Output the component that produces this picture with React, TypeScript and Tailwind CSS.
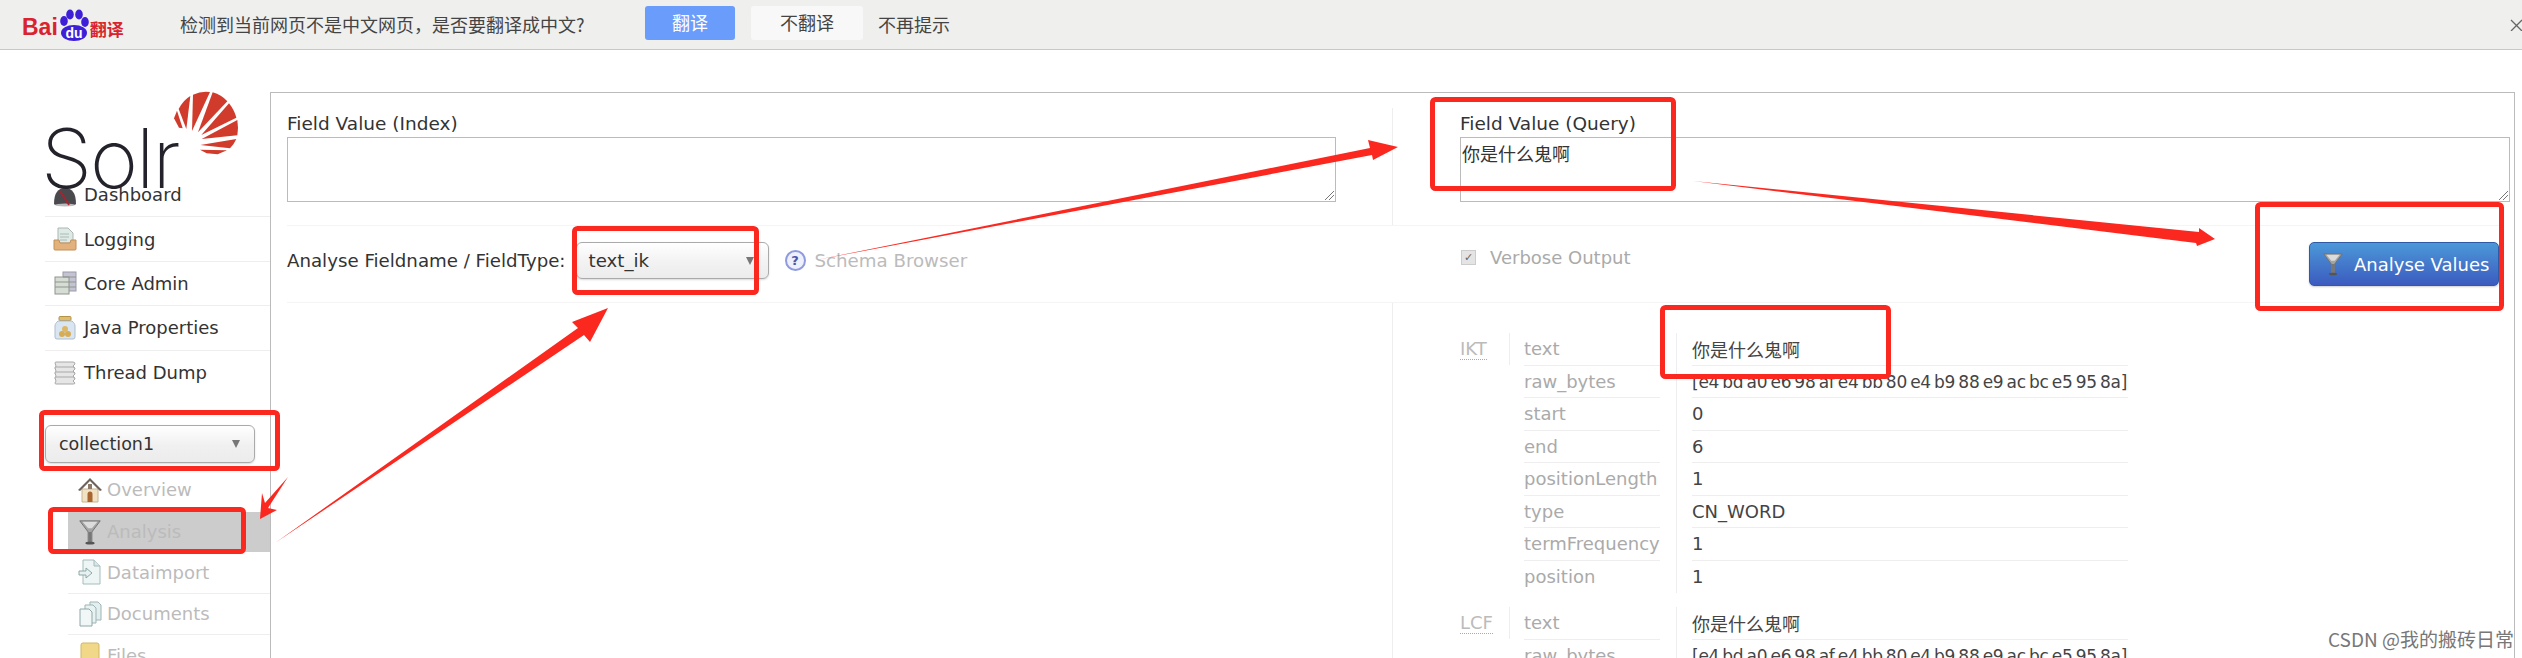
import type { ReactNode } from "react";

const CJK = "font-['Noto_Sans_CJK_SC',sans-serif]";

function Funnel({ className }: { className?: string }) {
  return (
    <svg viewBox="0 0 24 28" className={className}>
      <path d="M1 2h22l-9 12v11h-4V14z" fill="#a4a4a4" stroke="#6f6f6f" strokeWidth="1" />
      <path d="M4 3h16l-6 7h-4z" fill="#dcdcdc" />
      <rect x="10.5" y="14" width="3" height="12" fill="#777" />
      <ellipse cx="12" cy="26" rx="5" ry="1.5" fill="#555" />
    </svg>
  );
}

function IconDashboard() {
  return (
    <svg viewBox="0 0 24 24" className="h-6 w-6">
      <path d="M1 21c0-11 4-16 11-16s11 5 11 16c0 2-22 2-22 0z" fill="#4a4a4e" />
      <ellipse cx="12" cy="22" rx="10" ry="1.5" fill="#bbb" />
      <path d="M7 8l9 14" stroke="#b0202c" strokeWidth="1.6" />
    </svg>
  );
}

function IconLogging() {
  return (
    <svg viewBox="0 0 24 24" className="h-6 w-6">
      <path d="M5 1h10l5 5v10H5z" fill="#dfe9e6" stroke="#a9b8b4" />
      <path d="M7 7h9M7 10h9M7 13h7" stroke="#a8bcb8" />
      <path d="M1 13h5l1 3h10l1-3h5v9a1 1 0 0 1-1 1H2a1 1 0 0 1-1-1z" fill="#e3b27c" stroke="#c28f58" />
    </svg>
  );
}

function IconCores() {
  return (
    <svg viewBox="0 0 24 24" className="h-6 w-6">
      <rect x="10" y="1" width="13" height="19" fill="#c3c3d3" stroke="#9a9aa8" />
      <rect x="2" y="6" width="14" height="17" fill="#d6ddd4" stroke="#8f948e" />
      <path d="M2 11h14M2 16h14M10 6h13M16 11h7M16 16h7" stroke="#8f948e" />
    </svg>
  );
}

function IconJar() {
  return (
    <svg viewBox="0 0 24 24" className="h-6 w-6">
      <rect x="6" y="0.5" width="12" height="4" rx="1" fill="#e0bd6a" stroke="#b3924a" />
      <path d="M5 5h14c2 2 3 3 3 5v11a2 2 0 0 1-2 2H4a2 2 0 0 1-2-2V10c0-2 1-3 3-5z" fill="#d9e6f2" stroke="#aebdcb" />
      <circle cx="12" cy="13" r="3" fill="#dcb765" />
      <circle cx="9" cy="18" r="3" fill="#d6ad55" />
      <circle cx="15" cy="18" r="3" fill="#d6ad55" />
    </svg>
  );
}

function IconStack() {
  return (
    <svg viewBox="0 0 24 24" className="h-6 w-6">
      {[1, 6, 11, 16].map((y) => (
        <path key={y} d={`M2 ${y + 1}q0-1 1-1h17q2 0 2 2l-2 2 2 2q0 1-2 1H3q-1 0-1-1l1-2z`} fill="#e6e6e6" stroke="#a8a8a8" />
      ))}
    </svg>
  );
}

function IconHouse() {
  return (
    <svg viewBox="0 0 24 26" className="h-[26px] w-6">
      <path d="M4 12h16v13H4z" fill="#f2e2c4" stroke="#c9b48f" />
      <path d="M0 13L12 1l12 12-2 1L12 4 2 14z" fill="#6d625c" />
      <path d="M9.5 17a2.5 2.5 0 0 1 5 0v8h-5z" fill="#a9652f" />
      <rect x="10" y="7" width="4" height="5" fill="#8b7a68" />
    </svg>
  );
}

function IconImport() {
  return (
    <svg viewBox="0 0 24 26" className="h-[26px] w-6">
      <path d="M5 1h11l6 6v18H5z" fill="#eef5f5" stroke="#a5bcbc" />
      <path d="M16 1v6h6" fill="#d8e6e6" stroke="#a5bcbc" />
      <path d="M1 12h7V9l6 5-6 5v-3H1z" fill="#e8f1f1" stroke="#8ea8a8" />
    </svg>
  );
}

function IconDocuments() {
  return (
    <svg viewBox="0 0 24 26" className="h-[26px] w-6">
      <path d="M12 1h8l3 3v15H12z" fill="#e4eeee" stroke="#9db5b5" />
      <path d="M7 4h8l3 3v15H7z" fill="#e9f2f2" stroke="#9db5b5" />
      <path d="M2 8h9l3 3v14H2z" fill="#f1f7f7" stroke="#8ea8a8" />
    </svg>
  );
}

function IconFolder() {
  return (
    <svg viewBox="0 0 24 26" className="h-[26px] w-6">
      <rect x="3" y="1" width="18" height="24" rx="2" fill="#f0d888" stroke="#d3b763" />
    </svg>
  );
}

function NavRow({ icon, label, last }: { icon: ReactNode; label: string; last?: boolean }) {
  return (
    <div className={`flex h-[44.4px] items-center gap-[7px] pl-2 text-[18px] text-[#333] ${last ? "" : "border-b border-[#eeeeee]"}`}>
      {icon}
      <span>{label}</span>
    </div>
  );
}

function SubRow({ icon, label, active, border, h }: { icon: ReactNode; label: string; active?: boolean; border?: boolean; h: string }) {
  return (
    <div className={`flex items-center gap-[5px] pl-[10px] text-[18px] text-[#bbbbbb] ${h} ${active ? "bg-[#cccccc]" : ""} ${border ? "border-b border-[#eeeeee]" : ""}`}>
      {icon}
      <span>{label}</span>
    </div>
  );
}

function Sidebar() {
  return (
    <aside className="w-[225px] shrink-0">
      <div className="relative h-[81px]">
        <span className="absolute left-[-4px] top-[17px] text-[82px] leading-[100px] font-extralight tracking-[-2px] text-[#24232b] font-['Inter',sans-serif]">
          Solr
        </span>
        <svg viewBox="0 0 240 240" className="absolute left-[120px] top-[-7px] h-20 w-20">
          <g fill="#d03b2c">
            <path d="M27 100L36 77L53 130L42 128z" />
            <path d="M41 72Q55 45 76 33L64 132z" />
            <path d="M84 29Q110 17 135 21L81 138z" />
            <path d="M143 22Q170 30 187 49L99 142z" />
            <path d="M192 55Q208 75 214 98L109 150z" />
            <path d="M217 105Q221 130 217 151L110 162z" />
            <path d="M214 162Q207 178 195 190L106 180z" />
            <path d="M186 196L158 208L125 205L105 194z" />
          </g>
        </svg>
      </div>
      <NavRow icon={<IconDashboard />} label="Dashboard" />
      <NavRow icon={<IconLogging />} label="Logging" />
      <NavRow icon={<IconCores />} label="Core Admin" />
      <NavRow icon={<IconJar />} label="Java Properties" />
      <NavRow icon={<IconStack />} label="Thread Dump" last />
      <div className="mt-[30px] flex h-[38px] w-[210px] items-center justify-between rounded-[6px] border border-[#aaaaaa] bg-[linear-gradient(#ffffff,#f0f0f0_55%,#ececec)] pl-[13px] pr-[14px] text-[17.5px] text-[#333] shadow-[0_1px_2px_rgba(0,0,0,0.15)]">
        <span>collection1</span>
        <span className="h-0 w-0 border-x-[4px] border-t-[8px] border-x-transparent border-t-[#777]" />
      </div>
      <div className="ml-[23px] mt-[5px]">
        <SubRow icon={<IconHouse />} label="Overview" h="h-[44px]" />
        <SubRow icon={<Funnel className="h-[26px] w-6" />} label="Analysis" active h="h-10" />
        <SubRow icon={<IconImport />} label="Dataimport" border h="h-[42px]" />
        <SubRow icon={<IconDocuments />} label="Documents" border h="h-[41px]" />
        <SubRow icon={<IconFolder />} label="Files" h="h-[41px]" />
      </div>
    </aside>
  );
}

function FieldBox({ label, value, width }: { label: string; value?: string; width: string }) {
  return (
    <div>
      <div className="h-[29px] pt-[6px] text-[18.5px] leading-5 text-[#333]">{label}</div>
      <div className={`relative h-[65px] border border-[#bbbbbb] pl-px pt-[5px] text-[18px] leading-5 text-[#333] ${width} ${CJK}`}>
        {value}
        <svg viewBox="0 0 10 10" className="absolute bottom-px right-px h-[10px] w-[10px]">
          <path d="M1 10L10 1M5 10L10 5" stroke="#777" strokeWidth="1" />
        </svg>
      </div>
    </div>
  );
}

const TOKEN_ROWS: [string, string][] = [
  ["text", "你是什么鬼啊"],
  ["raw_bytes", "[e4 bd a0 e6 98 af e4 bb 80 e4 b9 88 e9 ac bc e5 95 8a]"],
  ["start", "0"],
  ["end", "6"],
  ["positionLength", "1"],
  ["type", "CN_WORD"],
  ["termFrequency", "1"],
  ["position", "1"],
];

function TokenStage({ name, rows }: { name: string; rows: [string, string][] }) {
  return (
    <div className="flex text-[18px]">
      <div className="h-8 w-[50px] shrink-0 border-r border-[#eeeeee] pt-[6px] leading-5 text-[#bbbbbb]">
        <span className="border-b border-dotted border-[#aaaaaa]">{name}</span>
      </div>
      <div className="ml-[14px] w-[136px] shrink-0">
        {rows.map(([key], i) => (
          <div key={key} className={`h-[32.5px] whitespace-nowrap pt-[6px] leading-5 text-[#aaaaaa] ${i < rows.length - 1 || rows.length === 2 ? "border-b border-[#eeeeee]" : ""}`}>
            {key}
          </div>
        ))}
      </div>
      <div className="ml-4 border-l border-[#eeeeee] pl-[15px]">
        <div className="w-[436px]">
          {rows.map(([key, val], i) => (
            <div
              key={key}
              className={`h-[32.5px] whitespace-nowrap pt-[6px] leading-5 text-[#444] ${key === "text" ? CJK : ""} ${key === "raw_bytes" ? "text-[17px] tracking-[-0.25px] [word-spacing:-2px]" : ""} ${i < rows.length - 1 || rows.length === 2 ? "border-b border-[#eeeeee]" : ""}`}
            >
              {val}
            </div>
          ))}
        </div>
      </div>
    </div>
  );
}

function Panel() {
  return (
    <main className="min-w-0 flex-1 border-x border-t border-[#bbbbbb]">
      <div className="ml-4 mr-[15px] flex h-[132px] pt-[15px]">
        <div className="w-[1105px] shrink-0">
          <FieldBox label="Field Value (Index)" width="w-[1049px]" />
        </div>
        <div className="min-w-0 flex-1 border-l border-[#eeeeee] pl-[67px]">
          <FieldBox label="Field Value (Query)" value="你是什么鬼啊" width="w-[1050px]" />
        </div>
      </div>
      <div className="ml-4 mr-[15px] flex h-[78px] items-center border-y border-[#f5f5f5]">
        <div className="mb-[7px] flex w-[1105px] shrink-0 items-center text-[18.2px] text-[#333]">
          <span className="whitespace-nowrap">Analyse Fieldname / FieldType:</span>
          <div className="ml-[10px] flex h-[37px] w-[193px] items-center justify-between rounded-[6px] border border-[#aaaaaa] bg-[linear-gradient(#ffffff,#f3f3f3_50%,#ececec)] pl-[12px] pr-[14px] shadow-[0_1px_2px_rgba(0,0,0,0.15)]">
            <span>text_ik</span>
            <span className="h-0 w-0 border-x-[4px] border-t-[8px] border-x-transparent border-t-[#777]" />
          </div>
          <span className="ml-[16px] flex h-[21px] w-[21px] items-center justify-center rounded-full border-2 border-[#8f9be0] bg-[#eef0fb] text-[13px] font-bold text-[#4a55a8]">?</span>
          <span className="ml-[9px] text-[#bbbbbb]">Schema Browser</span>
        </div>
        <div className="flex flex-1 items-center text-[18px] text-[#aaaaaa]">
          <span className="mb-[14px] ml-[69px] flex h-[15px] w-[15px] items-center justify-center border border-[#cccccc] bg-[#e4e4e4] text-[11px] leading-none text-[#666]">✓</span>
          <span className="mb-[14px] ml-[14px]">Verbose Output</span>
          <button className="ml-auto flex h-[44px] w-[190px] items-center gap-[11px] rounded-[5px] border border-[#2f5aa6] bg-[linear-gradient(#4b98d8,#3c5bbf)] pl-[13px] text-[18px] text-white shadow-[0_1px_2px_rgba(0,0,0,0.2)]">
            <Funnel className="h-6 w-[20px]" />
            <span className="whitespace-nowrap">Analyse Values</span>
          </button>
        </div>
      </div>
      <div className="ml-[1121px] h-[400px] border-l border-[#eeeeee] pl-[67px] pt-[30px]">
        <TokenStage name="IKT" rows={TOKEN_ROWS} />
        <div className="mt-[14px]">
          <TokenStage name="LCF" rows={TOKEN_ROWS.slice(0, 2)} />
        </div>
      </div>
    </main>
  );
}

function Annotations() {
  const boxes = [
    [41.5, 412.5, 236, 56],
    [50.5, 509.5, 193, 42],
    [574.5, 228.5, 182, 64],
    [1432.5, 99.5, 241, 89],
    [2257.5, 204.5, 244, 104],
    [1662.5, 307.5, 226, 69],
  ];
  const arrows = [
    "M288 477L268 508L277 510L260 519L262 493L265 503z",
    "M275 543L578 328L572 322L608 308L590 342L584 335z",
    "M816 260L1370 148L1368 140L1398 147L1373 160L1372 155z",
    "M1693 181L2199 232L2199 228L2215 239L2197 246L2196 243z",
  ];
  return (
    <svg viewBox="0 0 2522 658" className="pointer-events-none absolute inset-0 h-[658px] w-[2522px]">
      {boxes.map(([x, y, w, h]) => (
        <rect key={`${x}-${y}`} x={x} y={y} width={w} height={h} rx="3" fill="none" stroke="#fb2820" strokeWidth="5" />
      ))}
      {arrows.map((d) => (
        <path key={d} d={d} fill="#fb2820" />
      ))}
    </svg>
  );
}

export default function App() {
  return (
    <div className="relative h-[658px] w-[2522px] overflow-hidden bg-white font-['DejaVu_Sans',sans-serif]">
      <header className="flex h-[50px] items-center border-b border-[#c8c8c8] bg-[#efefee] pl-[22px]">
        <div className="flex w-[158px] shrink-0 items-end pb-[2px]">
          <span className="font-['Liberation_Sans',sans-serif] text-[23px] font-bold leading-[24px] text-[#d9232e]">Bai</span>
          <svg viewBox="0 0 30 32" className="mb-[-2px] ml-px h-8 w-[30px]">
            <g fill="#3e1fd8">
              <ellipse cx="5" cy="12" rx="3.8" ry="5" />
              <ellipse cx="11" cy="5.5" rx="3.8" ry="5" />
              <ellipse cx="20" cy="5.5" rx="3.8" ry="5" />
              <ellipse cx="26" cy="13" rx="3.8" ry="5" />
              <ellipse cx="15" cy="24" rx="13" ry="8" />
            </g>
            <text x="15" y="29" textAnchor="middle" fontSize="14" fontWeight="700" fill="#ffffff" fontFamily="Liberation Sans">du</text>
          </svg>
          <span className={`ml-px text-[17px] font-bold leading-[20px] text-[#d9232e] ${CJK}`}>翻译</span>
        </div>
        <span className={`w-[465px] shrink-0 text-[18px] text-[#444] ${CJK}`}>检测到当前网页不是中文网页，是否要翻译成中文?</span>
        <span className={`mb-[4px] flex h-[34px] w-[90px] shrink-0 items-center justify-center rounded-[3px] bg-[#6a9cfb] text-[18px] text-white ${CJK}`}>翻译</span>
        <span className={`mb-[4px] ml-4 flex h-[34px] w-[112px] shrink-0 items-center justify-center rounded-[3px] bg-[#f8f8f8] text-[18px] text-[#444] ${CJK}`}>不翻译</span>
        <span className={`ml-[15px] text-[18px] text-[#444] ${CJK}`}>不再提示</span>
        <svg viewBox="0 0 12 12" className="ml-auto h-[12px] w-[12px] shrink-0">
          <path d="M1 1l11 11M12 1L1 12" stroke="#666" strokeWidth="1.3" />
        </svg>
      </header>
      <div className="flex pl-[45px] pr-[7px] pt-[42px]">
        <Sidebar />
        <Panel />
      </div>
      <Annotations />
      <div className={`absolute bottom-[5px] right-[8px] text-[19px] text-[#777] ${CJK}`}>CSDN @我的搬砖日常</div>
    </div>
  );
}
